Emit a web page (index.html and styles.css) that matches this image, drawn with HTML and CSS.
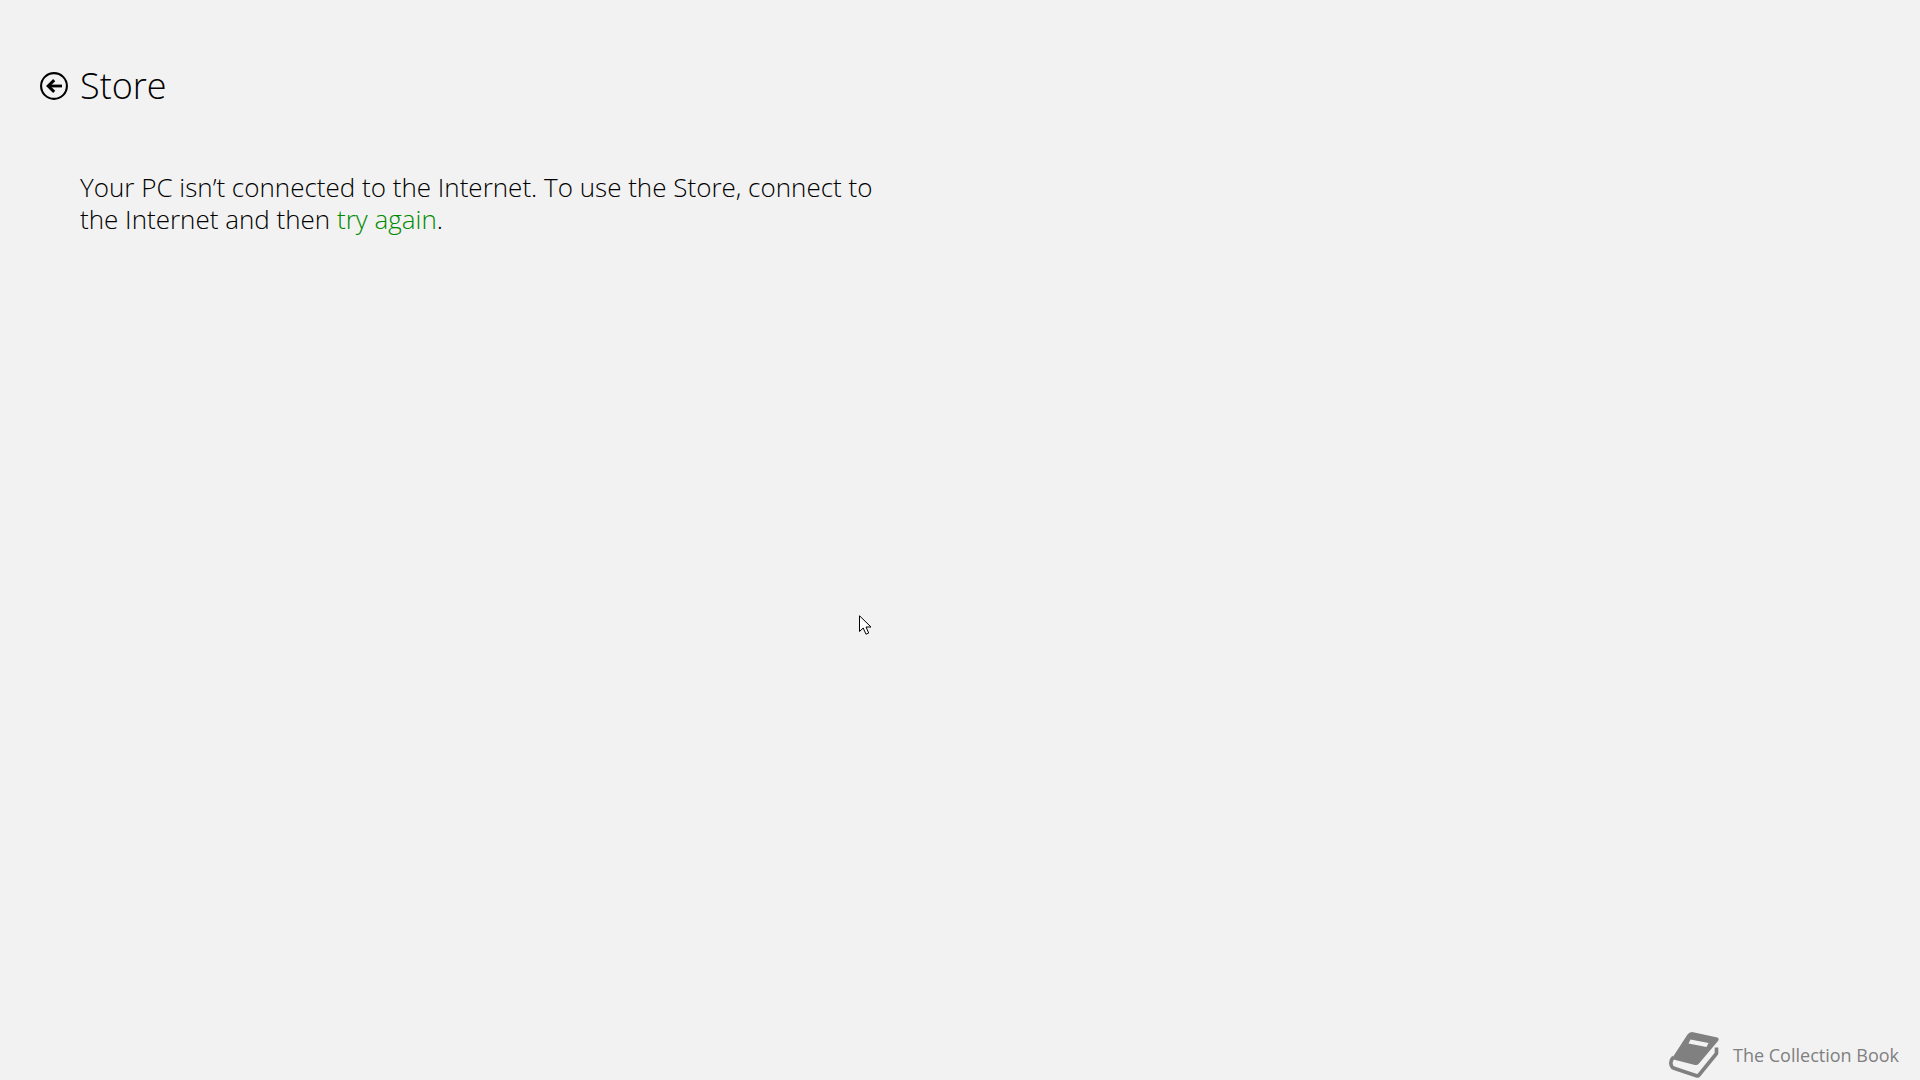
FILE: index.html
```
<!DOCTYPE html>
<html lang="en">
<head>
    <meta charset="UTF-8">
    <meta name="viewport" content="width=device-width, initial-scale=1.0">
    <title>Store</title>
    <link rel="stylesheet" href="styles.css">
</head>
<body>
    <header class="page-header">
        <button type="button" class="back-button" aria-label="Back">
            <svg viewBox="0 0 28 28" width="28" height="28" fill="none" stroke="#000000">
                <circle cx="14" cy="14" r="12.9" stroke-width="2.1"/>
                <path d="M22 14H8.5" stroke-width="2.8"/>
                <path d="M14.2 8.2L8.2 14L14.2 19.8" stroke-width="3"/>
            </svg>
        </button>
        <h1>Store</h1>
    </header>

    <main>
        <p class="message">Your PC isn’t connected to the Internet. To use the Store, connect to the Internet and then <a href="#">try again</a>.</p>
    </main>

    <footer class="watermark">
        <svg class="book" viewBox="0 0 50 46" width="50" height="46">
            <path fill="#808080" d="M23 0L48.500 5.500Q50.500 6.500 49 9L30 31.500Q28.500 33.500 26 33L4.500 27.500Q3 27 4.500 24L18.500 2.500Q20 0 23 0Z"/>
            <path fill="#f2f2f2" d="M21.500 7.500L39.500 11L37.500 15L19.500 11.500Z"/>
            <path fill="none" stroke="#808080" stroke-width="3.600" stroke-linejoin="round" d="M4.500 25Q0.500 29 2.500 34Q3 35.500 5 36.200L27.500 43.700Q29 44.200 30 43L47.500 21.500V15.500"/>
        </svg>
        <span>The Collection Book</span>
    </footer>

    <!-- Mouse pointer -->
    <svg class="pointer" viewBox="0 0 13 21" width="13" height="21">
        <path fill="#ffffff" stroke="#000000" d="M0.500 0.800V16.500L4.200 13L7 19.200L9.700 18L7 12H12Z"/>
    </svg>
</body>
</html>
```
FILE: styles.css
```
* {
    box-sizing: border-box;
}
body {
    font-family: "Open Sans", "Noto Sans", sans-serif;
    background-color: #F2F2F2;
    color: #000000;
    margin: 0;
    min-height: 100vh;
    display: flex;
    flex-direction: column;
}
.page-header {
    display: flex;
    align-items: center;
    gap: 12px;
    padding: 60px 40px 0;
}
.back-button {
    display: block;
    width: 28px;
    height: 28px;
    padding: 0;
    border: none;
    background: none;
}
.back-button svg {
    display: block;
}
h1 {
    font-size: 36px;
    font-weight: 300;
    line-height: 52px;
    margin: 0;
}
main {
    flex: 1;
    padding: 59px 80px 0;
}
.message {
    font-size: 26px;
    font-weight: 300;
    line-height: 32px;
    max-width: 820px;
    margin: 0;
}
.message a {
    color: #008A00;
    text-decoration: none;
}
.watermark {
    display: flex;
    align-items: center;
    justify-content: flex-end;
    gap: 14px;
    padding: 0 21px 2px;
    font-size: 18px;
    line-height: 24px;
    color: #808080;
}
.pointer {
    position: absolute;
    left: 859px;
    top: 615px;
}
```
